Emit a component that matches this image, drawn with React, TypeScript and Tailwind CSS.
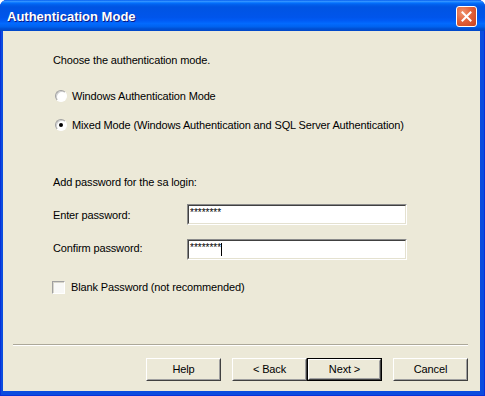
import React from "react";

const font = "font-['Liberation_Sans',Arial,sans-serif]";

function Radio({ checked }: { checked?: boolean }) {
  return (
    <div className="w-[12px] h-[12px] rounded-full border border-t-[#A0A0A0] border-l-[#A0A0A0] border-b-white border-r-white bg-white flex items-center justify-center shadow-[inset_1px_1px_0_#D0D0D0]">
      {checked && <div className="w-[4px] h-[4px] rounded-full bg-black" />}
    </div>
  );
}

function Button({ label, isDefault }: { label: string; isDefault?: boolean }) {
  return (
    <div
      className={
        "w-[75px] h-[23px] flex " +
        (isDefault ? "border border-black" : "")
      }
    >
      <div className="flex-1 border border-t-white border-l-white border-b-[#404040] border-r-[#404040] flex">
        <div className="flex-1 border border-t-[#ECE9D8] border-l-[#ECE9D8] border-b-[#A0A0A0] border-r-[#A0A0A0] bg-[#ECE9D8] flex items-center justify-center text-[11px] text-black">
          {label}
        </div>
      </div>
    </div>
  );
}

function Field({ caret }: { caret?: boolean }) {
  return (
    <div className="w-[220px] h-[21px] border border-t-[#8A8A8A] border-l-[#8A8A8A] border-b-white border-r-white">
      <div className="w-full h-full border border-t-[#404040] border-l-[#404040] border-b-[#E4E1D0] border-r-[#E4E1D0] bg-white pl-[1px] pt-[1px] flex items-start">
        <span className="text-[10px] leading-[12px] tracking-normal text-black font-['Liberation_Sans',Arial,sans-serif]">********</span>
        {caret && <span className="w-[1px] h-[13px] bg-black mt-[1px]" />}
      </div>
    </div>
  );
}

export default function App() {
  return (
    <div className={`w-[485px] h-[396px] flex flex-col bg-[#0B4CDF] rounded-t-[7px] overflow-hidden ${font} shadow-[inset_1px_0_0_#0831D9,inset_-1px_0_0_#0831D9,inset_0_-1px_0_#0831D9]`}>
      <div className="h-[31px] shrink-0 flex items-center justify-between pl-[7px] pr-[8px] bg-[linear-gradient(180deg,#0058EE_0%,#3593FF_4%,#288EFF_6%,#127DFF_8%,#036FFC_10%,#0262EE_14%,#0057E5_20%,#0054E3_24%,#0055EB_56%,#005BF5_66%,#026AFE_76%,#0062EF_86%,#0052D6_92%,#0046C8_100%)]">
        <span className="text-white font-bold text-[13px] leading-[16px] pt-[3px] [text-shadow:1px_1px_0_#0A1883]">
          Authentication Mode
        </span>
        <div className="w-[21px] h-[21px] mt-[1px] rounded-[3px] border border-white bg-[radial-gradient(circle_at_30%_30%,#F0956F_0%,#E2623B_45%,#C8401D_100%)] flex items-center justify-center">
          <svg width="11" height="11" viewBox="0 0 11 11">
            <path d="M1.5 1.5 L9.5 9.5 M9.5 1.5 L1.5 9.5" stroke="white" strokeWidth="2" strokeLinecap="square" />
          </svg>
        </div>
      </div>
      <div className="flex-1 flex pl-[3px] pr-[5px] pb-[5px]">
        <div className="flex-1 bg-[#ECE9D8] flex flex-col text-[11px] tracking-[-0.14px] text-black">
          <div className="pl-[50px] pt-[22px] flex flex-col">
            <div className="h-[14px] leading-[14px]">Choose the authentication mode.</div>
            <div className="mt-[22px] h-[14px] flex items-center pl-[2px] gap-[5px]">
              <Radio />
              <span className="leading-[14px]">Windows Authentication Mode</span>
            </div>
            <div className="mt-[15px] h-[14px] flex items-center pl-[2px] gap-[5px]">
              <Radio checked />
              <span className="leading-[14px]">
                Mixed Mode (Windows Authentication and SQL Server Authentication)
              </span>
            </div>
            <div className="mt-[43px] h-[14px] leading-[14px]">Add password for the sa login:</div>
            <div className="mt-[15px] h-[21px] flex items-center">
              <span className="w-[134px] leading-[14px]">Enter password:</span>
              <Field />
            </div>
            <div className="mt-[14px] h-[21px] flex items-center">
              <span className="w-[134px] leading-[14px] -mt-[3px]">Confirm password:</span>
              <Field caret />
            </div>
            <div className="mt-[20px] h-[14px] flex items-center gap-[6px] -ml-[1px]">
              <div className="w-[13px] h-[13px] border border-t-[#A0A0A0] border-l-[#A0A0A0] border-b-white border-r-white bg-[#F8F8F6] shadow-[inset_1px_1px_0_#D8D6CC]" />
              <span className="leading-[14px]">Blank Password (not recommended)</span>
            </div>
          </div>
          <div className="mt-auto ml-[10px] w-[455px] border-t border-t-[#ACA899] border-b border-b-white" />
          <div className="mt-[12px] mb-[10px] flex justify-end pr-[12px]">
            <Button label="Help" />
            <div className="w-[11px]" />
            <Button label="< Back" />
            <Button label="Next >" isDefault />
            <div className="w-[11px]" />
            <Button label="Cancel" />
          </div>
        </div>
      </div>
    </div>
  );
}
